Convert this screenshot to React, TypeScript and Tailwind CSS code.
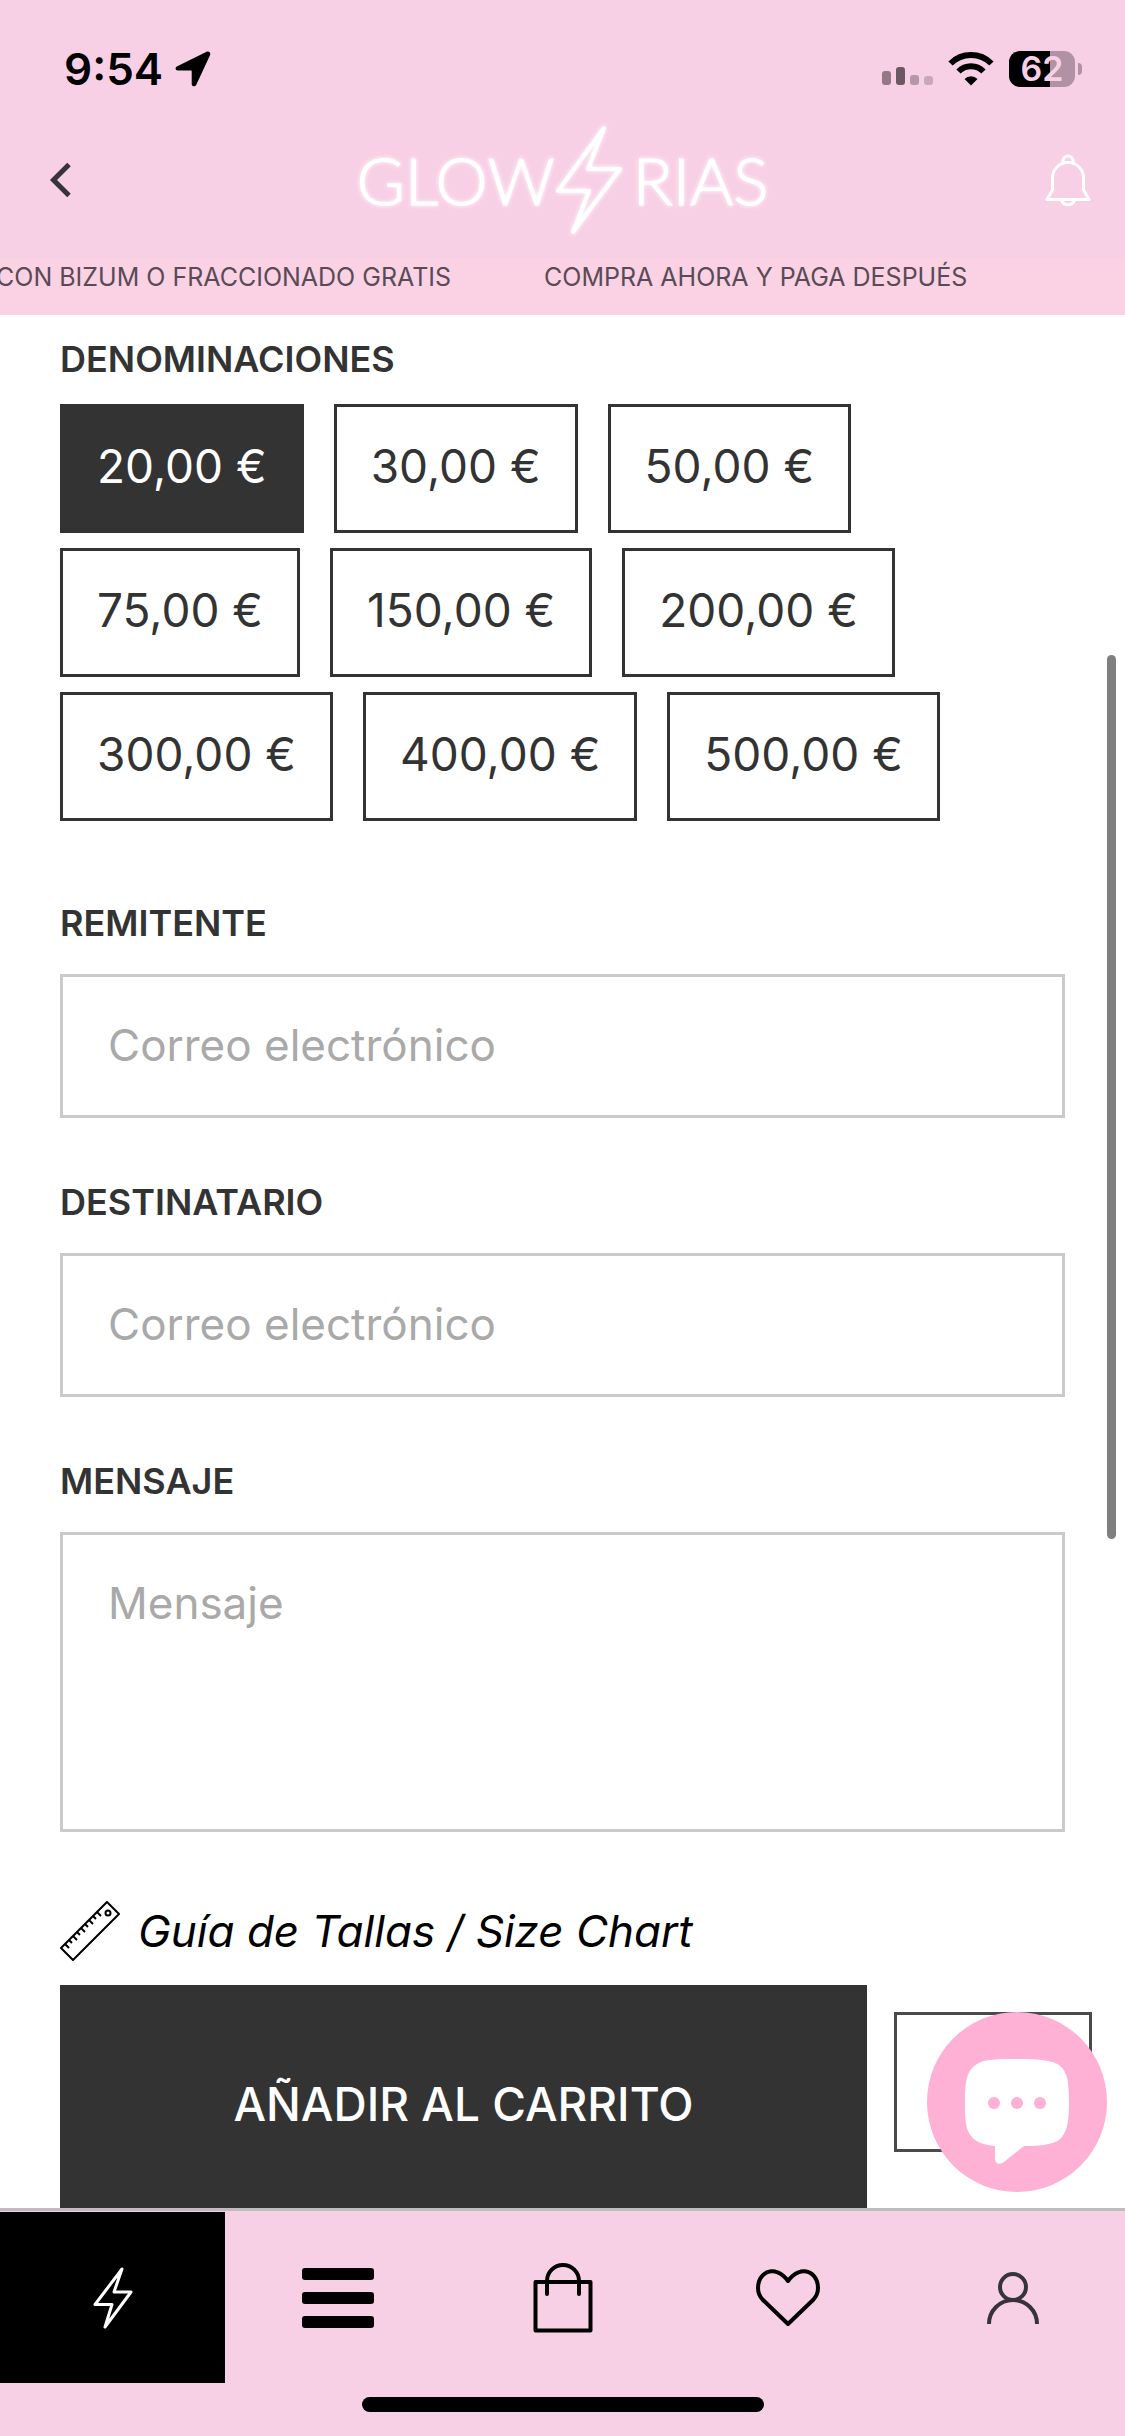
import { useState } from "react";

const AMOUNTS = [
  "20,00 €",
  "30,00 €",
  "50,00 €",
  "75,00 €",
  "150,00 €",
  "200,00 €",
  "300,00 €",
  "400,00 €",
  "500,00 €",
];

const labelClass = "block text-[36px] leading-10 font-semibold text-[#333333]";
const fieldClass =
  "mt-[31px] block w-full border-3 border-[#cacaca] bg-white px-[45px] text-[44px] leading-[52px] text-[#333333] outline-none placeholder:text-[#a9a9a9]";

function StatusBar() {
  return (
    <div className="flex h-[102px] items-center justify-between pt-9 pr-[43px] pl-16 text-black">
      <div className="flex items-center gap-3">
        <span className="text-[44px] leading-[52px] font-semibold">9:54</span>
        <svg className="h-9 w-9" viewBox="0 0 36 36" fill="currentColor">
          <path d="M2.3 15.2 31.6.8c2.4-1.1 4.5.8 3.4 3.4L21.2 34c-1 2.1-4.5 1.7-4.5-1V20.5c0-.7-.3-1-1-1H3.1C.2 19.5-.4 16.5 2.3 15.2Z" />
        </svg>
      </div>
      <div className="flex items-center gap-[15px]">
        <svg className="h-9 w-[51px]" viewBox="0 0 51 36">
          <rect x="0" y="20" width="9" height="14" rx="3" fill="#957886" />
          <rect x="14" y="16" width="9" height="18" rx="3" fill="#6c5762" />
          <rect x="28" y="24" width="9" height="10" rx="3" fill="#b797a7" />
          <rect x="42" y="25" width="9" height="9" rx="3" fill="#cba7b9" />
        </svg>
        <svg className="h-9 w-[46px]" viewBox="0 0 46 36" fill="none" stroke="black" strokeWidth="6">
          <path d="M2.5 12.5a29 29 0 0 1 41 0" />
          <path d="M10.5 20.5a17.5 17.5 0 0 1 25 0" />
          <path d="M23 34.500 16.500 28a9.200 9.200 0 0 1 13 0Z" fill="black" stroke="none" />
        </svg>
        <div className="flex items-center gap-[3px]">
          <span className="flex h-9 w-[66px] items-center justify-center rounded-[11px] bg-linear-to-r from-black from-62% to-[#b092a4] to-62% text-[34px] leading-9 font-semibold text-[#f8d0e6]">
            62
          </span>
          <span className="h-3 w-1 rounded-r-full bg-[#b092a4]" />
        </div>
      </div>
    </div>
  );
}

function Header() {
  return (
    <div className="grid h-[156px] grid-cols-[1fr_auto_1fr] items-center px-[33px]">
      <button aria-label="Volver" className="ml-4 justify-self-start text-[#37333a]">
        <svg className="h-9 w-6" viewBox="0 0 24 36" fill="none" stroke="currentColor" strokeWidth="5">
          <path d="M20 2.500 4.500 18 20 33.500" />
        </svg>
      </button>
      <div className="flex items-center font-['Lato',sans-serif] text-[66px] leading-[72px] font-light text-white drop-shadow-[0_0_2px_white] [-webkit-text-stroke:1px_white]">
        <span>GLOW</span>
        <svg className="mr-2.5 h-[110px] w-[68px]" viewBox="0 0 68 110" fill="none" stroke="white" strokeWidth="4">
          <path d="M49 3 3 66h31L18 107 65 44H33Z" strokeLinejoin="round" />
        </svg>
        <span>RIAS</span>
      </div>
      <button aria-label="Notificaciones" className="justify-self-end text-white">
        <svg className="h-[54px] w-12" viewBox="0 0 48 54" fill="none" stroke="currentColor" strokeWidth="3">
          <path d="M3 46.500h42L39.500 37V25a15.500 15.500 0 0 0-31 0v12Z" strokeLinejoin="round" />
          <path d="M19 10V8a5 5 0 0 1 10 0v2" />
          <path d="M17.500 47a6.800 6.800 0 0 0 13 0" />
        </svg>
      </button>
    </div>
  );
}

function Ticker() {
  return (
    <div className="-ml-1 flex h-[57px] gap-[93px] overflow-hidden pb-[18px] text-[25px] leading-[39px] whitespace-nowrap text-[#594b55]">
      <span>CON BIZUM O FRACCIONADO GRATIS</span>
      <span>COMPRA AHORA Y PAGA DESPUÉS</span>
    </div>
  );
}

function RulerIcon() {
  return (
    <svg className="h-[60px] w-[60px]" viewBox="0 0 60 60" fill="none" stroke="black" strokeWidth="2">
      <path d="M47 1 59 13 13 59 1 47Z" strokeLinejoin="round" />
      <circle cx="48" cy="12" r="2.500" />
      <path d="m5 43 4 4M9 39l3 3M13 35l4 4M17 31l3 3M21 27l4 4M25 23l3 3M29 19l4 4M33 15l3 3M37 11l4 4" />
    </svg>
  );
}

function ChatButton() {
  return (
    <button
      aria-label="Chat"
      className="absolute right-[18px] bottom-4 flex h-[180px] w-[180px] items-center justify-center rounded-full bg-[#feb1d5]"
    >
      <svg className="h-[180px] w-[180px]" viewBox="0 0 180 180">
        <path
          d="M90 47c22 0 34 1 42 6 8 6 10 16 10 36 0 22-2 32-10 39-8 5-20 6-35 6L77 150c-4 3-9 2-9-3v-13c-12-1-21-4-26-13-4-7-4-18-4-32 0-20 2-31 12-37 8-5 20-5 40-5Z"
          fill="white"
        />
        <circle cx="67" cy="91" r="6" fill="#feb1d5" />
        <circle cx="90" cy="91" r="6" fill="#feb1d5" />
        <circle cx="113" cy="91" r="6" fill="#feb1d5" />
      </svg>
    </button>
  );
}

function BottomNav() {
  return (
    <nav className="border-t-3 border-[#bfbbbe] bg-[#f8d0e6]">
      <div className="grid h-[172px] grid-cols-5 pt-px">
        <a href="#inicio" aria-label="Inicio" className="flex items-center justify-center bg-black text-white">
          <svg className="h-[62px] w-10" viewBox="0 0 40 62" fill="none" stroke="currentColor" strokeWidth="3">
            <path d="M29 2 2 37.500h17L12 60 38 25H21Z" strokeLinejoin="round" />
          </svg>
        </a>
        <a href="#menu" aria-label="Menú" className="flex items-center justify-center text-black">
          <svg className="h-[60px] w-[72px]" viewBox="0 0 72 60" fill="currentColor">
            <rect width="72" height="12" rx="3" />
            <rect y="24" width="72" height="12" rx="3" />
            <rect y="48" width="72" height="12" rx="3" />
          </svg>
        </a>
        <a href="#carrito" aria-label="Carrito" className="flex items-center justify-center text-black">
          <svg className="h-[70px] w-[60px]" viewBox="0 0 60 70" fill="none" stroke="currentColor" strokeWidth="4">
            <rect x="2.500" y="19" width="55" height="48.500" strokeLinejoin="round" />
            <path d="M14 31V18a16 16 0 0 1 32 0v13" strokeLinecap="round" />
          </svg>
        </a>
        <a href="#favoritos" aria-label="Favoritos" className="flex items-center justify-center text-black">
          <svg className="h-[58px] w-16" viewBox="0 0 64 58" fill="none" stroke="currentColor" strokeWidth="4">
            <path
              d="M32 12C25 2 17 2 15 2.300 7 3.500 2 10 2 19c0 5 2 9 5 12l25 24 25-24c3-3 5-7 5-12 0-9-5-15.500-13-16.700C47 2 39 2 32 12Z"
              strokeLinejoin="round"
            />
          </svg>
        </a>
        <a href="#cuenta" aria-label="Cuenta" className="flex items-center justify-center text-[#37333a]">
          <svg className="h-[52px] w-[52px]" viewBox="0 0 52 52" fill="none" stroke="currentColor" strokeWidth="4">
            <circle cx="26" cy="15" r="13" />
            <path d="M2 52a24 24 0 0 1 48 0" />
          </svg>
        </a>
      </div>
      <div className="flex justify-center pt-3.5 pb-6">
        <span className="h-[15px] w-[402px] rounded-full bg-black" />
      </div>
    </nav>
  );
}

export default function App() {
  const [amount, setAmount] = useState("20,00 €");

  return (
    <div className="flex h-screen flex-col overflow-hidden bg-white font-['Inter',sans-serif]">
      <header>
        <div className="bg-[#f8d0e6]">
          <StatusBar />
          <Header />
        </div>
        <div className="overflow-hidden bg-[#fad2e4]">
          <Ticker />
        </div>
      </header>

      <main className="relative min-h-0 flex-1 overflow-hidden">
        <form className="px-[60px] pt-6" onSubmit={(e) => e.preventDefault()}>
          <h2 className={labelClass}>DENOMINACIONES</h2>
          <div className="mt-[25px] flex flex-wrap gap-x-[30px] gap-y-[15px]">
            {AMOUNTS.map((value) => (
              <button
                key={value}
                type="button"
                aria-pressed={value === amount}
                onClick={() => setAmount(value)}
                className={`h-[129px] border-3 border-[#333333] px-[34px] pb-1.5 text-[46px] leading-[52px] ${
                  value === amount ? "bg-[#333333] text-white" : "bg-white text-[#333333]"
                }`}
              >
                {value}
              </button>
            ))}
          </div>

          <div className="mt-[82px]">
            <label htmlFor="sender" className={labelClass}>
              REMITENTE
            </label>
            <input id="sender" type="email" placeholder="Correo electrónico" className={`${fieldClass} h-36 pb-0.5`} />
          </div>
          <div className="mt-16">
            <label htmlFor="recipient" className={labelClass}>
              DESTINATARIO
            </label>
            <input id="recipient" type="email" placeholder="Correo electrónico" className={`${fieldClass} h-36 pb-0.5`} />
          </div>
          <div className="mt-16">
            <label htmlFor="message" className={labelClass}>
              MENSAJE
            </label>
            <textarea id="message" placeholder="Mensaje" className={`${fieldClass} h-[300px] resize-none py-[42px]`} />
          </div>

          <a href="#tallas" className="mt-[69px] flex items-center gap-[18px] text-[44px] leading-[52px] text-black italic">
            <RulerIcon />
            Guía de Tallas / Size Chart
          </a>

          <div className="mt-6 -mr-[27px] flex items-start gap-[27px]">
            <button
              type="submit"
              className="h-[238px] flex-1 bg-[#333333] text-[46px] leading-[52px] font-medium text-white"
            >
              AÑADIR AL CARRITO
            </button>
            <button type="button" aria-label="Favorito" className="mt-[27px] h-[140px] w-[198px] border-3 border-[#4a4a4a]" />
          </div>
        </form>

        <div className="absolute top-[340px] right-[9px] h-[884px] w-[9px] rounded-full bg-[#7f7f7f]" />
        <ChatButton />
      </main>

      <BottomNav />
    </div>
  );
}
